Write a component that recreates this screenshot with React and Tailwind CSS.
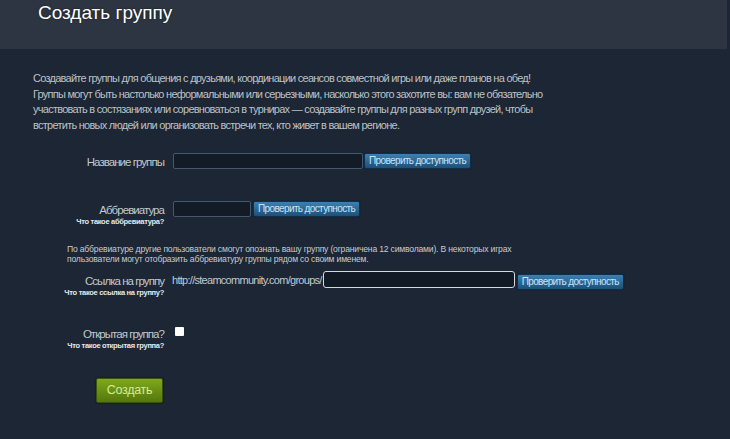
import React from "react";

const F = { fontFamily: '"Liberation Sans", Arial, sans-serif' };

function CheckBtn() {
  return (
    <button className="h-[16px] px-[4px] rounded-[2px] border border-[#10304a] bg-gradient-to-b from-[#3b80b3] to-[#1e5078] text-[10px] leading-[14px] text-[#c6e4f8] tracking-[-0.62px] whitespace-nowrap shadow-[0_0_1px_rgba(0,0,0,0.6)]">
      Проверить доступность
    </button>
  );
}

function Label({ main, sub }) {
  return (
    <div className="w-[164px] shrink-0 flex flex-col items-end text-right">
      <div className="text-[11.5px] leading-[14px] text-[#c2c8ce] tracking-[-0.95px] whitespace-nowrap">{main}</div>
      {sub && (
        <div className="text-[7.5px] leading-[9px] font-bold text-[#e6e9ec] tracking-[-0.3px] whitespace-nowrap">{sub}</div>
      )}
    </div>
  );
}

export default function App() {
  return (
    <div className="w-[730px] h-[439px] bg-[#1c2634] overflow-hidden" style={F}>
      <div className="w-[727px] h-[49px] bg-[#2c3541] pl-[38px] pt-[1px]">
        <h1 className="text-[19px] leading-[24px] text-white [text-shadow:0_0_2px_rgba(0,0,0,0.6)]">
          Создать группу
        </h1>
      </div>

      <p className="ml-[33px] mt-[22px] text-[11px] leading-[15.7px] text-[#bcc1c5] tracking-[-0.74px] whitespace-nowrap">
        Создавайте группы для общения с друзьями, координации сеансов совместной игры или даже планов на обед!
        <br />
        Группы могут быть настолько неформальными или серьезными, насколько этого захотите вы: вам не обязательно
        <br />
        участвовать в состязаниях или соревноваться в турнирах — создавайте группы для разных групп друзей, чтобы
        <br />
        встретить новых людей или организовать встречи тех, кто живет в вашем регионе.
      </p>

      {/* Row 1 */}
      <div className="flex items-start gap-[9px] mt-[19px]">
        <div className="pt-[2px]">
          <Label main="Название группы" />
        </div>
        <div className="flex items-center gap-[1px]">
          <div className="w-[190px] h-[16px] rounded-[2px] border border-[#44586d] bg-[#131b26]" />
          <CheckBtn />
        </div>
      </div>

      {/* Row 2 */}
      <div className="flex items-start gap-[9px] mt-[32px]">
        <div className="pt-[2px]">
          <Label main="Аббревиатура" sub="Что такое аббревиатура?" />
        </div>
        <div className="flex items-center gap-[2px]">
          <div className="w-[78px] h-[16px] rounded-[2px] border border-[#44586d] bg-[#131b26]" />
          <CheckBtn />
        </div>
      </div>

      <p className="ml-[67px] mt-[18px] text-[8.6px] leading-[10px] text-[#c6cbd0] tracking-[-0.19px] whitespace-nowrap">
        По аббревиатуре другие пользователи смогут опознать вашу группу (ограничена 12 символами). В некоторых играх
        <br />
        пользователи могут отобразить аббревиатуру группы рядом со своим именем.
      </p>

      {/* Row 3 */}
      <div className="flex items-start gap-[8px] mt-[4px]">
        <div className="pt-[6px]">
          <Label main="Ссылка на группу" sub="Что такое ссылка на группу?" />
        </div>
        <div className="flex items-center">
          <span className="text-[11px] leading-[14px] text-[#c2c8ce] tracking-[-0.72px] whitespace-nowrap">
            http://steamcommunity.com/groups/
          </span>
          <div className="ml-[1px] w-[192px] h-[17px] rounded-[3px] border border-[#d3d9df] bg-[#121a25]" />
          <div className="ml-[2px]">
            <CheckBtn />
          </div>
        </div>
      </div>

      {/* Row 4 */}
      <div className="flex items-start gap-[11px] mt-[30px]">
        <Label main="Открытая группа?" sub="Что такое открытая группа?" />
        <div className="w-[9px] h-[9px] bg-white rounded-[1px]" />
      </div>

      <div className="ml-[96px] mt-[27px]">
        <button className="w-[67px] h-[25px] rounded-[2px] border border-[#3b5209] bg-gradient-to-b from-[#7fa81d] to-[#55780b] text-[12.5px] text-[#d6ec8f] tracking-[-0.3px] shadow-[0_0_2px_rgba(0,0,0,0.7)]">
          Создать
        </button>
      </div>
    </div>
  );
}
